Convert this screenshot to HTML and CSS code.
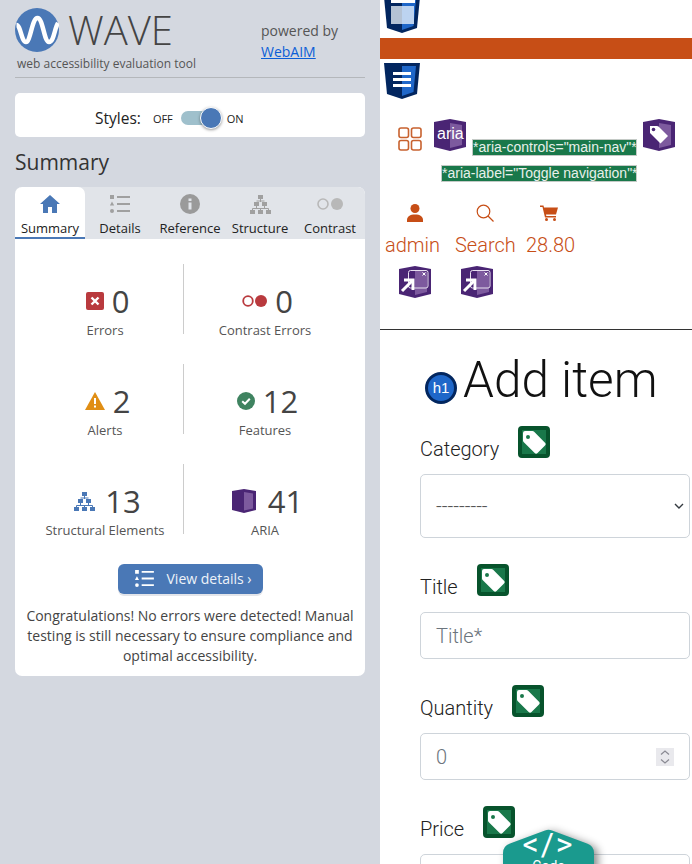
FILE: index.html
```html
<!DOCTYPE html>
<html lang="en">
<head>
<meta charset="utf-8">
<title>WAVE - Add item</title>
<link rel="stylesheet" href="styles.css">
</head>
<body>
<svg class="defs" width="0" height="0" aria-hidden="true">
  <defs>
    <symbol id="tag" viewBox="4 3 24 24">
      <path d="M7 4h7.500a2 2 0 0 1 1.400.6L27 15.700a2 2 0 0 1 0 2.800L19.500 26a2 2 0 0 1-2.800 0L5.600 14.900a2 2 0 0 1-.6-1.400V6a2 2 0 0 1 2-2zM10 8a2 2 0 1 0 0 4 2 2 0 0 0 0-4z" fill="#fff" fill-rule="evenodd"/>
    </symbol>
    <symbol id="aria-shield" viewBox="0 0 32 32">
      <path d="M0 3 16 0l16 3v25l-16 4-16-4z" fill="#4a2574"/>
      <path d="M16 4l12 2v20l-12 3z" fill="#7d5a9e"/>
    </symbol>
    <symbol id="html-shield" viewBox="0 0 36 36">
      <path d="M0 0h36l-3 31-15 5-15-5z" fill="#02265f"/>
      <path d="M18 3h14l-2.500 26L18 33z" fill="#1f67c9"/>
    </symbol>
    <symbol id="modal" viewBox="0 0 32 32">
      <rect x="9.500" y="4.500" width="19.500" height="17.500" rx="2" fill="none" stroke="#e8e0f0" stroke-width="1"/>
      <path d="M23.500 6.500l3 3m0-3l-3 3" stroke="#fff" stroke-width="1"/>
      <path d="M3 25 14 14" stroke="#fff" stroke-width="3"/>
      <path d="M5 14h9v10" fill="none" stroke="#fff" stroke-width="3"/>
    </symbol>
    <symbol id="tree" viewBox="0 0 21 19">
      <path d="M8 0h5v4H8zM4 7h5v4H4zm8 0h5v4h-5zM0 15h5v4H0zm8 0h5v4H8zm8 0h5v4h-5z" fill="currentColor"/>
      <path d="M10.500 4v3M6.500 11v2.500M14.500 11v2.500M6.500 6h8M2.500 15v-1.500h16V15M10.500 13.500V15" stroke="currentColor" fill="none"/>
    </symbol>
    <symbol id="list" viewBox="0 0 20 18">
      <path d="M0 0h4v4H0zM7 1h13v2H7zM7 8h13v2H7zM7 15h13v2H7z" fill="currentColor"/>
      <path d="M2 6.500 4.200 10.500H-.2z" fill="currentColor"/>
      <circle cx="2" cy="16" r="2" fill="currentColor"/>
    </symbol>
  </defs>
</svg>

<aside class="wave">
  <header class="brand">
    <div class="brand-main">
      <div class="logo-row">
        <svg class="logo" viewBox="0 0 44 44" aria-hidden="true">
          <circle cx="22" cy="22" r="22" fill="#4a78b6"/>
          <path d="M1.500 17C5.500 17 6.500 34 11 34S17 10 22.500 10 29 34 34 34 39.500 20 43 15" fill="none" stroke="#fff" stroke-width="4.500"/>
        </svg>
        <span class="wordmark">WAVE</span>
      </div>
      <div class="tagline">web accessibility evaluation tool</div>
    </div>
    <div class="powered">powered by<br><a href="#">WebAIM</a></div>
  </header>

  <section class="styles-card">
    <span class="styles-label">Styles:</span>
    <span class="switch-text off">OFF</span>
    <span class="switch"><span class="knob"></span></span>
    <span class="switch-text">ON</span>
  </section>

  <h2 class="summary-title">Summary</h2>

  <section class="panel">
    <nav class="tabs">
      <div class="tab active">
        <svg class="tab-icon" viewBox="0 0 20 18" aria-hidden="true"><path d="M10 0 20 9h-3v9h-5v-6H8v6H3V9H0z" fill="#4a78b6"/></svg>
        <span>Summary</span>
      </div>
      <div class="tab">
        <svg class="tab-icon grey" viewBox="0 0 20 18" aria-hidden="true"><use href="#list"/></svg>
        <span>Details</span>
      </div>
      <div class="tab">
        <svg class="tab-icon info" viewBox="0 0 20 20" aria-hidden="true"><circle cx="10" cy="10" r="10" fill="#9a9a9a"/><path d="M8.500 4.500h3v2.500h-3zM8.500 8.500h3v7h-3z" fill="#e1e4e9"/></svg>
        <span>Reference</span>
      </div>
      <div class="tab">
        <svg class="tab-icon grey wide" viewBox="0 0 21 19" aria-hidden="true"><use href="#tree"/></svg>
        <span>Structure</span>
      </div>
      <div class="tab">
        <svg class="tab-icon contrast" viewBox="0 0 26 12" aria-hidden="true"><circle cx="6" cy="6" r="5" fill="none" stroke="#b8b8b8" stroke-width="1.600"/><circle cx="20" cy="6" r="6" fill="#b8b8b8"/></svg>
        <span>Contrast</span>
      </div>
    </nav>

    <div class="stats">
      <div class="stat">
        <div class="stat-top"><svg class="si" viewBox="0 0 18 18" aria-hidden="true"><rect width="18" height="18" rx="2" fill="#b93a3e"/><path d="M5.500 5.500l7 7m0-7l-7 7" stroke="#fff" stroke-width="2.400"/></svg><span class="num">0</span></div>
        <div class="stat-label">Errors</div>
      </div>
      <div class="stat">
        <div class="stat-top"><svg class="si ce" viewBox="0 0 25 12" aria-hidden="true"><circle cx="6" cy="6" r="4.800" fill="none" stroke="#b93a3e" stroke-width="1.800"/><circle cx="19" cy="6" r="6" fill="#b93a3e"/></svg><span class="num">0</span></div>
        <div class="stat-label">Contrast Errors</div>
      </div>
      <div class="stat">
        <div class="stat-top"><svg class="si al" viewBox="0 0 20 18" aria-hidden="true"><path d="M10 0 20 18H0z" fill="#e08e14"/><path d="M9 6h2v6H9zM9 13.500h2v2H9z" fill="#fff"/></svg><span class="num">2</span></div>
        <div class="stat-label">Alerts</div>
      </div>
      <div class="stat">
        <div class="stat-top"><svg class="si" viewBox="0 0 18 18" aria-hidden="true"><circle cx="9" cy="9" r="9" fill="#3f8360"/><path d="M5.200 9.200 8 11.800l4.800-5" fill="none" stroke="#fff" stroke-width="2"/></svg><span class="num">12</span></div>
        <div class="stat-label">Features</div>
      </div>
      <div class="stat">
        <div class="stat-top"><svg class="si tr" viewBox="0 0 21 19" aria-hidden="true"><use href="#tree"/></svg><span class="num">13</span></div>
        <div class="stat-label">Structural Elements</div>
      </div>
      <div class="stat">
        <div class="stat-top"><svg class="si ar" viewBox="0 0 24 24" aria-hidden="true"><path d="M0 2 12 0l12 2v19l-12 3-12-3z" fill="#4a2574"/><path d="M12 3l9 1.500v15L12 21.500z" fill="#7d5a9e"/></svg><span class="num">41</span></div>
        <div class="stat-label">ARIA</div>
      </div>
    </div>

    <div class="details-row">
      <a class="details-btn" href="#">
        <svg class="btn-icon" viewBox="0 0 20 18" aria-hidden="true"><use href="#list"/></svg>
        <span>View details ›</span>
      </a>
    </div>
    <p class="congrats">Congratulations! No errors were detected! Manual testing is still necessary to ensure compliance and optimal accessibility.</p>
  </section>
</aside>

<main class="page">
  <svg class="shield top" viewBox="0 0 36 36" aria-hidden="true">
    <use href="#html-shield"/>
    <path d="M7 3h24v3H7z" fill="#fff"/>
    <path d="M7 9h11v18H7z" fill="#b4c2d4"/>
    <path d="M18 9h12v18H18z" fill="#bcd3f0"/>
  </svg>
  <div class="orange-bar"></div>
  <svg class="shield nav-shield" viewBox="0 0 36 36" aria-hidden="true">
    <use href="#html-shield"/>
    <path d="M9 9h18v3H9zM9 15h18v3H9zM9 21h18v3H9z" fill="#fff"/>
  </svg>

  <div class="toggler">
    <div class="toggler-row">
      <svg class="grid-icon" viewBox="0 0 24 24" aria-hidden="true">
        <g fill="none" stroke="#c8622f" stroke-width="1.600"><rect x="1" y="1" width="9.500" height="9.500" rx="2"/><rect x="13.500" y="1" width="9.500" height="9.500" rx="2"/><rect x="1" y="13.500" width="9.500" height="9.500" rx="2"/><rect x="13.500" y="13.500" width="9.500" height="9.500" rx="2"/></g>
      </svg>
      <span class="aria-badge"><svg viewBox="0 0 32 32" aria-hidden="true"><use href="#aria-shield"/></svg><span class="aria-word">aria</span></span>
      <span class="attr first">*aria-controls="main-nav"*</span>
      <svg class="aria-tag" viewBox="0 0 32 32" aria-hidden="true"><use href="#aria-shield"/><path d="M7 7h7l1.500.5L25 17l-7.500 7.500L7 14z" fill="#fff"/><circle cx="10.500" cy="10.500" r="1.800" fill="#4a2574"/></svg>
    </div>
    <div class="attr-row"><span class="attr">*aria-label="Toggle navigation"*</span></div>
  </div>

  <div class="nav-items">
    <div class="nav-item item-admin">
      <svg class="nav-icon" viewBox="0 0 18 18" aria-hidden="true"><circle cx="9" cy="4.500" r="4.500" fill="#c74e16"/><path d="M1 18v-2c0-3.500 3-5.500 8-5.500s8 2 8 5.500v2z" fill="#c74e16"/></svg>
      <span>admin</span>
      <svg class="modal-badge" viewBox="0 0 32 32" aria-hidden="true"><use href="#aria-shield"/><use href="#modal"/></svg>
    </div>
    <div class="nav-item item-search">
      <svg class="nav-icon" viewBox="0 0 18 18" aria-hidden="true"><circle cx="7.500" cy="7.500" r="6.300" fill="none" stroke="#c74e16" stroke-width="1.200"/><path d="M12 12l5.500 5.500" stroke="#c74e16" stroke-width="1.200"/></svg>
      <span>Search</span>
      <svg class="modal-badge" viewBox="0 0 32 32" aria-hidden="true"><use href="#aria-shield"/><use href="#modal"/></svg>
    </div>
    <div class="nav-item item-cart">
      <svg class="nav-icon" viewBox="0 0 18 16" aria-hidden="true"><path d="M0 .5h3.500L4 2.500h14l-2 7H6l.3 1.500H16v1.500H5L2.500 2H0z" fill="#c74e16"/><circle cx="6.500" cy="14.500" r="1.500" fill="#c74e16"/><circle cx="14.500" cy="14.500" r="1.500" fill="#c74e16"/></svg>
      <span>28.80</span>
    </div>
  </div>

  <hr class="rule">

  <h1 class="title">
    <span class="h1-badge">h1</span>
    <span>Add item</span>
  </h1>

  <form class="form">
    <div class="field f-cat">
      <div class="lab"><label>Category</label><span class="tag-badge"><svg viewBox="0 0 24 24" aria-hidden="true"><use href="#tag"/></svg></span></div>
      <div class="control select"><span class="dashes">---------</span><svg class="chev" viewBox="0 0 10 6" aria-hidden="true"><path d="M1 1l4 4 4-4" fill="none" stroke="#343a40" stroke-width="1.400"/></svg></div>
    </div>
    <div class="field">
      <div class="lab"><label>Title</label><span class="tag-badge"><svg viewBox="0 0 24 24" aria-hidden="true"><use href="#tag"/></svg></span></div>
      <div class="control"><span class="ph">Title*</span></div>
    </div>
    <div class="field">
      <div class="lab"><label>Quantity</label><span class="tag-badge"><svg viewBox="0 0 24 24" aria-hidden="true"><use href="#tag"/></svg></span></div>
      <div class="control number"><span class="ph">0</span><span class="spin"><svg viewBox="0 0 18 18" aria-hidden="true"><path d="M5 6.500l4-3.500 4 3.500M5 11.500l4 3.500 4-3.500" fill="none" stroke="#8a8a93" stroke-width="1.200"/></svg></span></div>
    </div>
    <div class="field">
      <div class="lab"><label>Price</label><span class="tag-badge"><svg viewBox="0 0 24 24" aria-hidden="true"><use href="#tag"/></svg></span></div>
      <div class="control"></div>
    </div>
  </form>

  <div class="code-badge">
    <svg class="code-shape" viewBox="0 0 91 60" aria-hidden="true"><path d="M0 24Q0 17 7 14.500L42 1.500Q45.500 0 49 1.500L84 14.500Q91 17 91 24V60H0z" fill="#1a9a8e"/></svg>
    <span class="code-sign">&lt;/&gt;</span>
    <span class="code-word">Code</span>
  </div>
</main>
</body>
</html>
```

FILE: styles.css
```css
* { box-sizing: border-box; }
html, body { margin: 0; height: 864px; overflow: hidden; }
body { display: flex; background: #fff; font-family: "Roboto", sans-serif; }
.defs { position: absolute; }

/* WAVE sidebar */
.wave { width: 380px; height: 864px; flex: none; background: #d4d8e0; padding: 8px 15px 0; font-family: "Open Sans", sans-serif; color: #333; }
.brand { display: flex; justify-content: space-between; height: 70px; border-bottom: 1px solid #b4b7bb; }
.logo-row { display: flex; align-items: center; height: 44px; }
.logo { width: 44px; height: 44px; flex: none; }
.wordmark { margin-left: 9px; font-size: 40px; font-weight: 300; color: #444; line-height: 44px; }
.tagline { margin: 3px 0 0 2px; font-size: 12px; line-height: 18px; color: #555; }
.powered { width: 104px; margin-top: 13px; font-size: 14px; line-height: 20.500px; color: #555; }
.powered a { color: #0b5ed7; }

.styles-card { display: flex; align-items: center; height: 44px; margin-top: 15px; padding: 6px 0 0 80px; background: #fff; border-radius: 5px; color: #222; }
.styles-label { font-size: 15.500px; margin-right: 12px; }
.switch-text { font-size: 11px; }
.switch { position: relative; width: 33px; height: 14px; margin: 0 13px 0 8px; background: #9fc0cc; border-radius: 7px; }
.knob { position: absolute; right: -8px; top: -4px; width: 22px; height: 22px; background: #4a78b6; border: 1px solid #fff; border-radius: 50%; box-shadow: 0 1px 3px rgba(0,0,0,.4); }

.summary-title { margin: 13px 0 12px; font-size: 21px; font-weight: 400; line-height: 25px; color: #333; }

.panel { height: 489px; background: #fff; border-radius: 7px; overflow: hidden; }
.tabs { display: flex; height: 52px; background: #e1e4e9; }
.tab { flex: 1 1 0; display: flex; flex-direction: column; align-items: center; padding-top: 8px; font-size: 13px; line-height: 18px; color: #222; white-space: nowrap; }
.tab.active { background: #fff; border-bottom: 2px solid #4a78b6; border-radius: 7px 7px 0 0; }
.tab-icon { width: 20px; height: 18px; margin-bottom: 6px; }
.tab-icon.grey { color: #a0a0a0; }
.tab-icon.info { width: 20px; height: 20px; margin: -1px 0 5px; }
.tab-icon.wide { width: 21px; height: 19px; margin-bottom: 5px; }
.tab-icon.contrast { width: 26px; height: 12px; margin: 3px 0 9px; }

.stats { display: grid; grid-template-columns: 180px 140px; grid-auto-rows: 70px; row-gap: 30px; margin-top: 25px; }
.stat { position: relative; display: flex; flex-direction: column; align-items: center; color: #444; }
.stat:nth-child(odd)::after { content: ""; position: absolute; left: 168px; top: 0; bottom: 0; width: 1px; background: #ccc; }
.stat-top { display: flex; align-items: center; gap: 8px; height: 36px; margin-top: 19px; padding-left: 5px; }
.si { width: 18px; height: 18px; flex: none; }
.si.ce { width: 25px; height: 12px; }
.si.al { width: 20px; height: 18px; }
.si.tr { width: 21px; height: 19px; margin-right: 2px; color: #4a78b6; }
.si.ar { width: 24px; height: 24px; margin-right: 4px; }
.num { font-size: 31px; line-height: 36px; font-weight: 400; color: #444; }
.stat-label { font-size: 13px; line-height: 18px; color: #555; margin-top: 2px; }

.details-row { display: flex; justify-content: center; margin-top: 30px; }
.details-btn { display: flex; align-items: center; width: 145px; height: 30px; padding: 0 0 1px 17px; gap: 13px; background: #4a78b6; border-radius: 6px; box-shadow: 0 2px 0 #e3e5ea; color: #eef3f9; font-size: 14px; text-decoration: none; }
.btn-icon { width: 19px; height: 17px; color: #fff; }
.congrats { margin: 12px 8px 0; font-size: 14px; line-height: 20px; text-align: center; color: #444; }

/* Page */
.page { position: relative; width: 312px; height: 864px; flex: none; overflow: hidden; }
.shield { display: block; width: 36px; height: 36px; }
.shield.top { margin: -3px 0 0 4px; }
.orange-bar { height: 21px; margin-top: 5px; background: #c74e16; }
.nav-shield { margin: 4px 0 0 4px; }

.toggler { height: 88px; padding-top: 20px; }
.toggler-row { display: flex; align-items: flex-start; }
.grid-icon { width: 24px; height: 24px; margin: 8px 0 0 18px; }
.aria-badge { position: relative; width: 32px; height: 32px; margin-left: 12px; }
.aria-badge svg { display: block; width: 32px; height: 32px; }
.aria-word { position: absolute; left: 3px; top: 3px; font: 16px/24px "Liberation Sans", sans-serif; color: #fff; }
.attr { display: inline-block; height: 17px; background: #19784a; border: 1px solid #c4cac6; font: 14px/15px "Liberation Sans", sans-serif; color: #e8f0eb; white-space: nowrap; }
.attr.first { margin: 20px 0 0 6px; width: 165px; }
.aria-tag { width: 32px; height: 32px; margin-left: 6px; }
.attr-row { margin: 7px 0 0 61px; }
.attr-row .attr { width: 196px; }

.nav-items { display: flex; align-items: flex-start; height: 127px; margin-top: 15px; color: #c74e16; font-size: 20px; font-weight: 300; }
.nav-item { display: flex; flex-direction: column; align-items: flex-start; line-height: 24px; }
.nav-item span { margin-top: 11px; }
.nav-icon { width: 18px; height: 18px; margin-top: 2px; }
.modal-badge { width: 32px; height: 32px; margin-top: 9px; }
.item-admin { width: 75px; padding-left: 5px; }
.item-admin .nav-icon { margin-left: 21px; }
.item-admin .modal-badge { margin-left: 14px; }
.item-search { width: 71px; }
.item-search .nav-icon { margin-left: 21px; }
.item-search .modal-badge { margin-left: 6px; }
.item-cart { font-weight: 350; }
.item-cart .nav-icon { margin-left: 14px; }
.rule { margin: 0; border: 0; border-top: 1px solid #333; }

.title { display: flex; align-items: center; height: 60px; margin: 20px 0 0 45px; font-size: 49.500px; font-weight: 300; line-height: 60px; color: #111; }
.h1-badge { width: 32px; height: 32px; margin: 16px 6px 0 0; background: #1f67c9; border: 3px solid #02265f; border-radius: 50%; font: 15px/26px "Liberation Sans", sans-serif; color: #fff; text-align: center; }

.form { margin-top: 16px; padding: 0 2px 0 40px; }
.field { display: flex; flex-direction: column; margin-bottom: 26px; }
.lab { display: flex; align-items: flex-start; color: #222; font-size: 20px; font-weight: 300; }
.lab label { margin-top: 11px; line-height: 24px; }
.tag-badge { display: flex; align-items: center; justify-content: center; width: 32px; height: 32px; margin-left: 19px; background: #19784a; border: 4px solid #07532c; border-radius: 4px; }
.tag-badge svg { width: 24px; height: 24px; }
.control { display: flex; align-items: center; justify-content: space-between; height: 47px; margin-top: 13px; padding: 0 15px; border: 1px solid #ced4da; border-radius: 5px; background: #fff; }
.select { height: 64px; padding-right: 5px; }
.dashes { font-size: 20px; font-weight: 300; color: #555; }
.chev { width: 10px; height: 6px; }
.ph { font-size: 20px; font-weight: 300; color: #6c757d; }
.spin { display: block; width: 18px; height: 18px; background: #e9e9ed; }
.spin svg { display: block; width: 18px; height: 18px; }

.code-badge { position: absolute; left: 123px; top: 829px; width: 91px; height: 60px; color: #fff; text-align: center; }
.code-shape { position: absolute; left: 0; top: 0; width: 91px; height: 60px; filter: drop-shadow(4px 2px 4px rgba(0,0,0,.45)); }
.code-sign { position: relative; display: block; font-size: 32px; font-weight: 400; line-height: 30px; letter-spacing: 2px; }
.code-word { position: relative; display: block; font-size: 14px; line-height: 16px; margin-top: -1px; }
```
